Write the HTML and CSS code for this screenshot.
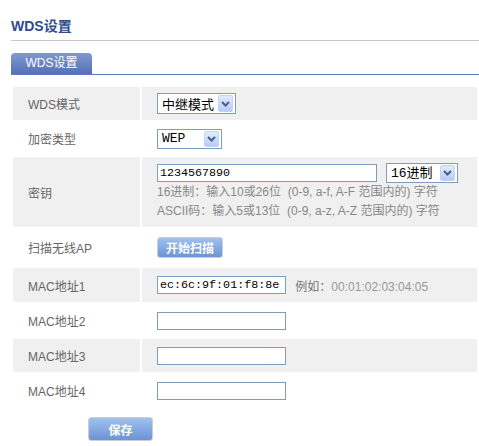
FILE: index.html
```html
<!DOCTYPE html>
<html>
<head>
<meta charset="UTF-8">
<title>WDS设置</title>
<link rel="stylesheet" href="styles.css">
</head>
<body>
<div class="page">
  <h1 class="title">WDS设置</h1>

  <div class="tabs">
    <span class="tab">WDS设置</span>
  </div>

  <table class="form">
    <tr class="odd h33">
      <td class="label">WDS模式</td>
      <td>
        <span class="select w79">
          <span class="value">中继模式</span>
          <span class="arrow"><svg width="9" height="6" viewBox="0 0 9 6"><path d="M1 1 L4.5 4.5 L8 1" fill="none" stroke="#4a5f88" stroke-width="2"/></svg></span>
        </span>
      </td>
    </tr>
    <tr class="h33">
      <td class="label">加密类型</td>
      <td>
        <span class="select w65">
          <span class="value mono">WEP</span>
          <span class="arrow"><svg width="9" height="6" viewBox="0 0 9 6"><path d="M1 1 L4.5 4.5 L8 1" fill="none" stroke="#4a5f88" stroke-width="2"/></svg></span>
        </span>
      </td>
    </tr>
    <tr class="odd h70">
      <td class="label">密钥</td>
      <td>
        <div class="keyline">
          <input class="text w220" type="text" value="1234567890">
          <span class="select w72">
            <span class="value mono">16进制</span>
            <span class="arrow"><svg width="9" height="6" viewBox="0 0 9 6"><path d="M1 1 L4.5 4.5 L8 1" fill="none" stroke="#4a5f88" stroke-width="2"/></svg></span>
          </span>
        </div>
        <div class="hint">16进制：输入10或26位&nbsp; (0-9, a-f, A-F 范围内的) 字符</div>
        <div class="hint">ASCII码：输入5或13位&nbsp; (0-9, a-z, A-Z 范围内的) 字符</div>
      </td>
    </tr>
    <tr class="h37">
      <td class="label">扫描无线AP</td>
      <td><button class="btn w66" type="button">开始扫描</button></td>
    </tr>
    <tr class="odd h34">
      <td class="label">MAC地址1</td>
      <td>
        <input class="text w129" type="text" value="ec:6c:9f:01:f8:8e">
        <span class="example">例如：<span class="num">00:01:02:03:04:05</span></span>
      </td>
    </tr>
    <tr class="h33">
      <td class="label">MAC地址2</td>
      <td><input class="text w129" type="text" value=""></td>
    </tr>
    <tr class="odd h33">
      <td class="label">MAC地址3</td>
      <td><input class="text w129" type="text" value=""></td>
    </tr>
    <tr class="h33">
      <td class="label">MAC地址4</td>
      <td><input class="text w129" type="text" value=""></td>
    </tr>
  </table>

  <div class="actions">
    <button class="btn save" type="button">保存</button>
  </div>
</div>
</body>
</html>
```

FILE: styles.css
```css
body { margin: 0; background: #fff; font-family: "Liberation Sans", "Noto Sans CJK SC", sans-serif; font-size: 12px; }
.page { padding-left: 11px; }

.title { margin: 0; padding-top: 16px; padding-bottom: 4px; line-height: 20px; font-size: 14px; font-weight: bold; color: #2f4b8d; border-bottom: 1px solid #c9c9c9; }

.tabs { margin-top: 12px; border-bottom: 1px solid #5b78c0; height: 21px; }
.tab { display: inline-block; width: 81px; height: 21px; line-height: 21px; text-align: center; color: #fff; background: linear-gradient(#8099d4, #5571b5); border-radius: 4px 4px 0 0; }

.form { margin-top: 10px; width: 468px; border-collapse: separate; border-spacing: 2px; }
.form td { padding: 0 0 0 15px; vertical-align: middle; }
.form td.label { width: 112px; color: #666; }
.form tr.odd td { background: #f0f0f0; }
.h33 { height: 33px; }
.h34 { height: 34px; }
.h37 { height: 37px; }
.h70 { height: 70px; }

.select { display: inline-flex; align-items: center; box-sizing: border-box; height: 21px; border: 1px solid #7f9db9; background: #fff; vertical-align: middle; }
.select .value { flex: 1; padding-left: 4px; font-family: "Noto Sans CJK SC", sans-serif; font-size: 13px; line-height: 19px; color: #000; }
.select .value.mono { font-family: "Liberation Mono", "Noto Sans CJK SC", monospace; font-size: 13px; }
.select .arrow { display: flex; align-items: center; justify-content: center; box-sizing: border-box; width: 15px; height: 17px; margin-right: 2px; border: 1px solid #c3d3f5; border-radius: 2px; background: linear-gradient(#e3ecfe, #b6cbf6); }
.w79 { width: 79px; }
.w65 { width: 65px; height: 20px; }
.w65 .arrow { height: 16px; }
.w72 { width: 72px; height: 20px; }
.w72 .arrow { height: 16px; }

.text { box-sizing: border-box; height: 18px; margin: 0; padding: 0 2px; border: 1px solid #7f9db9; font-family: "Liberation Mono", monospace; font-size: 11.7px; color: #000; vertical-align: middle; }
.w220 { width: 220px; }
.w129 { width: 129px; }

.keyline { display: flex; align-items: center; gap: 9px; height: 20px; }
.hint { line-height: 19px; color: #888; }

.example { margin-left: 6px; color: #777; vertical-align: middle; }
.example .num { color: #999; }

.btn { box-sizing: border-box; height: 21px; padding: 0; border: 1px solid #c8cfd9; border-radius: 3px; background: linear-gradient(#a1c1ee, #6c94d4); color: #fff; font-family: "Noto Sans CJK SC", sans-serif; font-size: 12px; font-weight: bold; }
.w66 { width: 66px; }

.actions { margin-top: 8px; padding-left: 77px; }
.save { width: 65px; height: 24px; }
```
